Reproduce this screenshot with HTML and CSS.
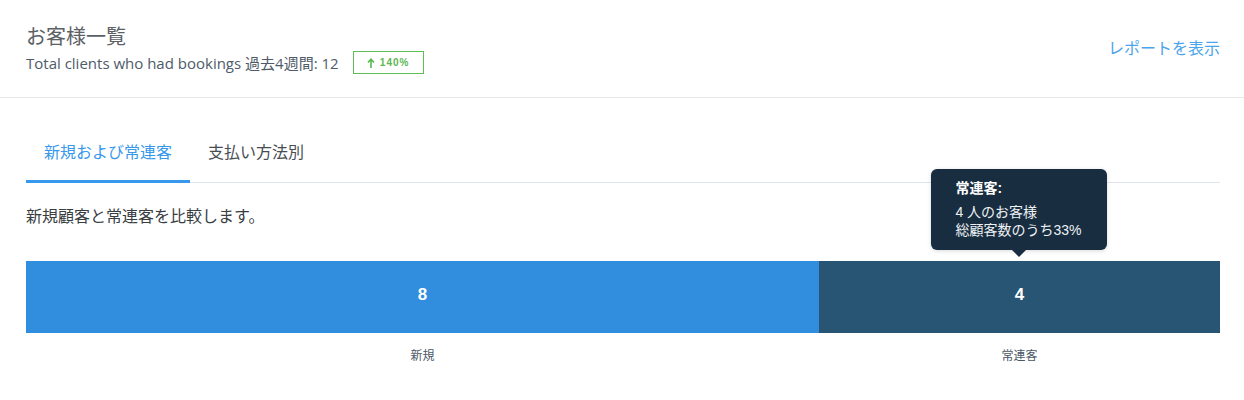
FILE: index.html
```html
<!DOCTYPE html>
<html lang="ja">
<head>
<meta charset="utf-8">
<title>お客様一覧</title>
<link rel="stylesheet" href="styles.css">
</head>
<body>
<div class="page">
  <header class="header">
    <div class="header-left">
      <h1 class="title">お客様一覧</h1>
      <div class="subtitle-row">
        <span class="subtitle">Total clients who had bookings 過去4週間: 12</span>
        <span class="badge">
          <svg class="badge-arrow" width="8" height="10" viewBox="0 0 8 10"><path d="M4 10V1.5M1 4.5L4 1.2L7 4.5" fill="none" stroke="currentColor" stroke-width="1.6"/></svg>
          140%
        </span>
      </div>
    </div>
    <a class="report-link">レポートを表示</a>
  </header>
  <main class="content">
    <nav class="tabs">
      <div class="tab tab-active">新規および常連客</div>
      <div class="tab">支払い方法別</div>
    </nav>
    <p class="desc">新規顧客と常連客を比較します。</p>
    <div class="chart">
      <div class="bar">
        <div class="seg seg-new" style="width:66.4%">8</div>
        <div class="seg seg-ret">
          4
          <div class="tooltip">
            <div class="tip-title">常連客:</div>
            <div class="tip-line">4 人のお客様</div>
            <div class="tip-line">総顧客数のうち33%</div>
          </div>
        </div>
      </div>
      <div class="labels">
        <div class="label" style="width:66.4%">新規</div>
        <div class="label label-ret">常連客</div>
      </div>
    </div>
  </main>
</div>
</body>
</html>
```
FILE: styles.css
```css
* { box-sizing: border-box; }
html, body { margin: 0; padding: 0; background: #fff; }
body {
  font-family: "Liberation Sans", Arial, "Noto Sans CJK JP", sans-serif;
  color: #333;
}
.page { width: 1244px; }
.header {
  height: 98px;
  border-bottom: 1px solid #e6e8ea;
  display: flex;
  justify-content: space-between;
  align-items: center;
  padding: 0 24px 0 26px;
}
.header-left { display: flex; flex-direction: column; padding-top: 2px; }
.title {
  margin: 0;
  font-size: 20px;
  line-height: 24px;
  font-weight: normal;
  color: #5c6166;
}
.subtitle-row { display: flex; align-items: center; margin-top: 2px; height: 24px; }
.subtitle {
  font-family: "Open Sans", "Noto Sans CJK JP", sans-serif;
  font-size: 15px;
  line-height: 20px;
  color: #4e5b69;
}
.badge {
  margin-left: 14px;
  width: 71px;
  height: 23px;
  border: 1px solid #5fbd55;
  color: #5bb852;
  font-size: 10px;
  font-weight: bold;
  letter-spacing: 1px;
  display: flex;
  align-items: center;
  justify-content: center;
  gap: 5px;
}
.badge-arrow { display: block; }
.report-link {
  font-size: 16px;
  color: #4ba4ec;
  margin-top: -4px;
}
.content { padding: 22px 24px 0 26px; }
.tabs {
  display: flex;
  border-bottom: 1px solid #dfe5eb;
}
.tab {
  font-size: 16px;
  line-height: 24px;
  padding: 21px 18px 15px;
  border-bottom: 3px solid transparent;
  margin-bottom: -1px;
  color: #484d53;
}
.tab-active { color: #3899ec; border-bottom-color: #3899ec; }
.desc {
  margin: 24px 0 0;
  font-size: 16px;
  line-height: 20px;
  color: #383d42;
}
.chart { margin-top: 34px; }
.bar { display: flex; height: 72px; }
.seg {
  display: flex;
  align-items: center;
  justify-content: center;
  color: #fff;
  font-size: 17px;
  font-weight: bold;
  padding-bottom: 4px;
}
.seg-new { background: #318ddd; }
.seg-ret { background: #285573; flex: 1; position: relative; }
.tooltip {
  position: absolute;
  left: 50%;
  transform: translateX(-50%);
  bottom: calc(100% + 11px);
  width: 176px;
  padding: 10px 24px 11px;
  background: #182d40;
  border-radius: 6px;
  box-shadow: 0 1px 4px rgba(0,0,0,0.15);
  text-align: left;
  font-size: 14px;
  line-height: 18px;
  color: #eef1f4;
  font-weight: normal;
}
.tooltip::after {
  content: "";
  position: absolute;
  left: 50%;
  top: 100%;
  margin-left: -7px;
  border-left: 7px solid transparent;
  border-right: 7px solid transparent;
  border-top: 7px solid #182d40;
}
.tip-title { font-weight: bold; color: #fff; margin-bottom: 6px; }
.labels { display: flex; margin-top: 14px; }
.label {
  text-align: center;
  font-size: 12px;
  line-height: 18px;
  color: #4a5866;
}
.label-ret { flex: 1; }
```
